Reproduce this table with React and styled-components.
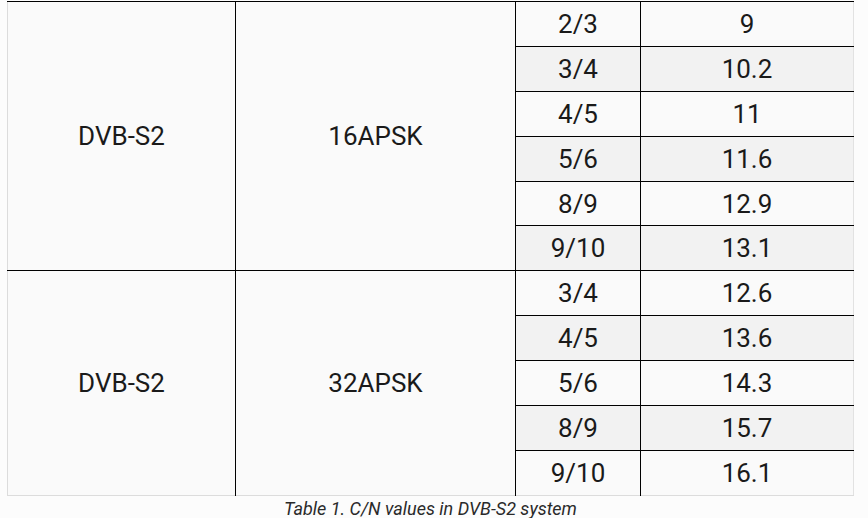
import React from 'react'
import styled, { createGlobalStyle } from 'styled-components'

const GlobalStyle = createGlobalStyle`
	html, body {
		margin: 0;
		padding: 0;
		background: #fcfcfc;
		font-family: Roboto, "Liberation Sans", sans-serif;
	}
`

const Figure = styled.figure`
	margin: 0;
	padding: 1px 0 0 7px;
	width: 847px;
`

const Table = styled.table`
	width: 847px;
	border-collapse: collapse;
	table-layout: fixed;
	border-left: 1px solid #dcdcdc;
	border-right: 1px solid #e2e2e2;
	border-bottom: 1px solid #dcdcdc;
	font-size: 26px;
	color: #1a1a1a;
`

const Row = styled.tr`
	height: 44.9px;
	background: ${props => (props.$shade ? '#f2f2f2' : '#fafafa')};
	border-top: 1px solid #000;
`

const Cell = styled.td`
	padding: 0;
	text-align: center;
	vertical-align: middle;
	border-left: ${props => (props.$first ? 'none' : '1px solid #000')};
	background: ${props => (props.$span ? '#fafafa' : 'inherit')};
	line-height: 1;
`

const Caption = styled.figcaption`
	font-style: italic;
	font-size: 18px;
	color: #2a2a2a;
	text-align: center;
	margin-top: 2px;
`

const groups = [
	{
		system: 'DVB-S2',
		mod: '16APSK',
		rows: [
			['2/3', '9'],
			['3/4', '10.2'],
			['4/5', '11'],
			['5/6', '11.6'],
			['8/9', '12.9'],
			['9/10', '13.1']
		]
	},
	{
		system: 'DVB-S2',
		mod: '32APSK',
		rows: [
			['3/4', '12.6'],
			['4/5', '13.6'],
			['5/6', '14.3'],
			['8/9', '15.7'],
			['9/10', '16.1']
		]
	}
]

export default function App() {
	let index = 0
	return (
		<>
			<GlobalStyle />
			<Figure>
				<Table>
					<colgroup>
						<col style={{ width: 228 }} />
						<col style={{ width: 280 }} />
						<col style={{ width: 125 }} />
						<col />
					</colgroup>
					<tbody>
						{groups.map((g, gi) =>
							g.rows.map(([rate, cn], ri) => {
								const shade = index % 2 === 1
								index++
								return (
									<Row key={gi + '-' + ri} $shade={shade}>
										{ri === 0 && (
											<>
												<Cell $first $span rowSpan={g.rows.length}>
													{g.system}
												</Cell>
												<Cell $span rowSpan={g.rows.length}>
													{g.mod}
												</Cell>
											</>
										)}
										<Cell>{rate}</Cell>
										<Cell>{cn}</Cell>
									</Row>
								)
							})
						)}
					</tbody>
				</Table>
				<Caption>Table 1. C/N values in DVB-S2 system</Caption>
			</Figure>
		</>
	)
}
